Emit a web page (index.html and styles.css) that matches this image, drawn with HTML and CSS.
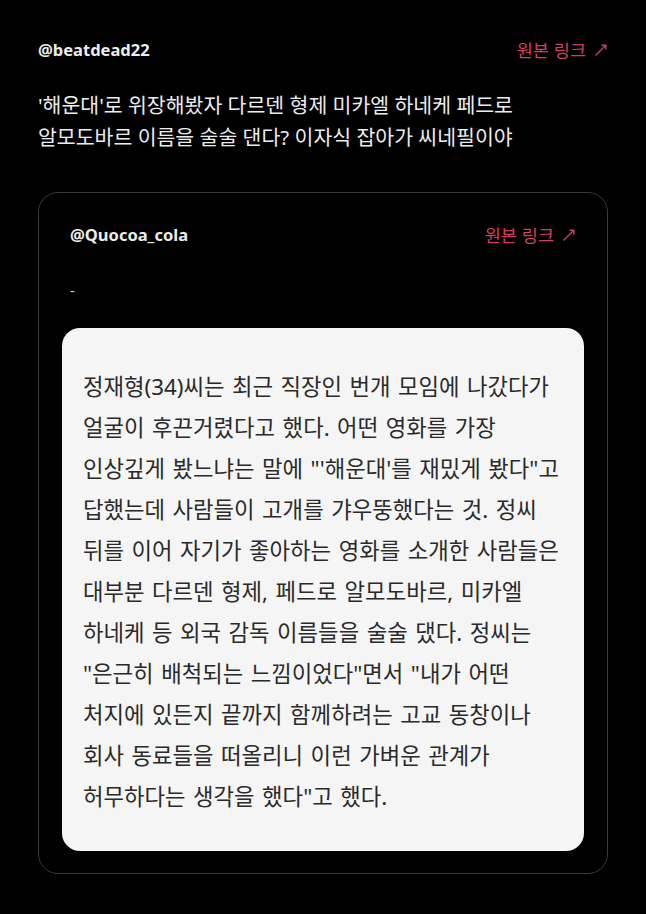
FILE: index.html
```html
<!DOCTYPE html>
<html lang="ko">
<head>
<meta charset="utf-8">
<link rel="stylesheet" href="styles.css">
</head>
<body>
<main class="page">
  <header class="row">
    <span class="handle">@beatdead22</span>
    <a class="link">원본 링크 <svg class="arrow" viewBox="0 0 14 14" width="14" height="14"><path d="M2 12 L11.5 2.5" /><path d="M8 2.2 L11.8 2.2 L11.8 6" /></svg></a>
  </header>
  <p class="title">'해운대'로 위장해봤자 다르덴 형제 미카엘 하네케 페드로<br>알모도바르 이름을 술술 댄다? 이자식 잡아가 씨네필이야</p>

  <section class="card">
    <div class="row">
      <span class="handle">@Quocoa_cola</span>
      <a class="link">원본 링크 <svg class="arrow" viewBox="0 0 14 14" width="14" height="14"><path d="M2 12 L11.5 2.5" /><path d="M8 2.2 L11.8 2.2 L11.8 6" /></svg></a>
    </div>
    <p class="dash">-</p>
    <div class="clip">
      <p class="clip-text">정재형(34)씨는 최근 직장인 번개 모임에 나갔다가<br>얼굴이 후끈거렸다고 했다. 어떤 영화를 가장<br>인상깊게 봤느냐는 말에 "'해운대'를 재밌게 봤다"고<br>답했는데 사람들이 고개를 갸우뚱했다는 것. 정씨<br>뒤를 이어 자기가 좋아하는 영화를 소개한 사람들은<br>대부분 다르덴 형제, 페드로 알모도바르, 미카엘<br>하네케 등 외국 감독 이름들을 술술 댔다. 정씨는<br>"은근히 배척되는 느낌이었다"면서 "내가 어떤<br>처지에 있든지 끝까지 함께하려는 고교 동창이나<br>회사 동료들을 떠올리니 이런 가벼운 관계가<br>허무하다는 생각을 했다"고 했다.</p>
    </div>
  </section>
</main>
</body>
</html>
```

FILE: styles.css
```css
html, body {
  margin: 0;
  padding: 0;
  background: #000;
}
body {
  font-family: "Noto Sans", "Noto Sans CJK KR", sans-serif;
  color: #ececec;
}
.page {
  padding: 40px 38px 0 38px;
}
.row {
  display: flex;
  justify-content: space-between;
  align-items: center;
  height: 20px;
}
.handle {
  font-size: 16.5px;
  font-weight: 700;
  line-height: 20px;
  color: #ececec;
}
.link {
  font-family: "Noto Sans CJK KR", sans-serif;
  font-size: 17.5px;
  line-height: 20px;
  color: #cf4063;
  display: flex;
  align-items: center;
  gap: 8px;
}
.arrow {
  fill: none;
  stroke: #cf4063;
  stroke-width: 1.4;
  stroke-linecap: round;
}
.title {
  font-family: "Noto Sans", "Noto Sans CJK KR", sans-serif;
  font-size: 20.5px;
  line-height: 32px;
  margin: 29px 0 39px 0;
  color: #ececec;
  white-space: nowrap;
}
.card {
  border: 1px solid #3a3a3a;
  border-radius: 20px;
  padding: 32px 23px 22px 23px;
}
.card .row {
  padding: 0 8px;
}
.dash {
  margin: 35px 8px 0 8px;
  font-size: 15px;
  line-height: 20px;
  color: #cfcfcf;
}
.clip {
  margin-top: 28px;
  background: #f5f5f5;
  border-radius: 18px;
  padding: 38px 20px 34px 21px;
}
.clip-text {
  margin: 0;
  font-family: "Noto Sans", "Noto Sans CJK KR", sans-serif;
  font-size: 22.3px;
  word-spacing: 1.7px;
  line-height: 41px;
  color: #2a2a2a;
  white-space: nowrap;
}
```
